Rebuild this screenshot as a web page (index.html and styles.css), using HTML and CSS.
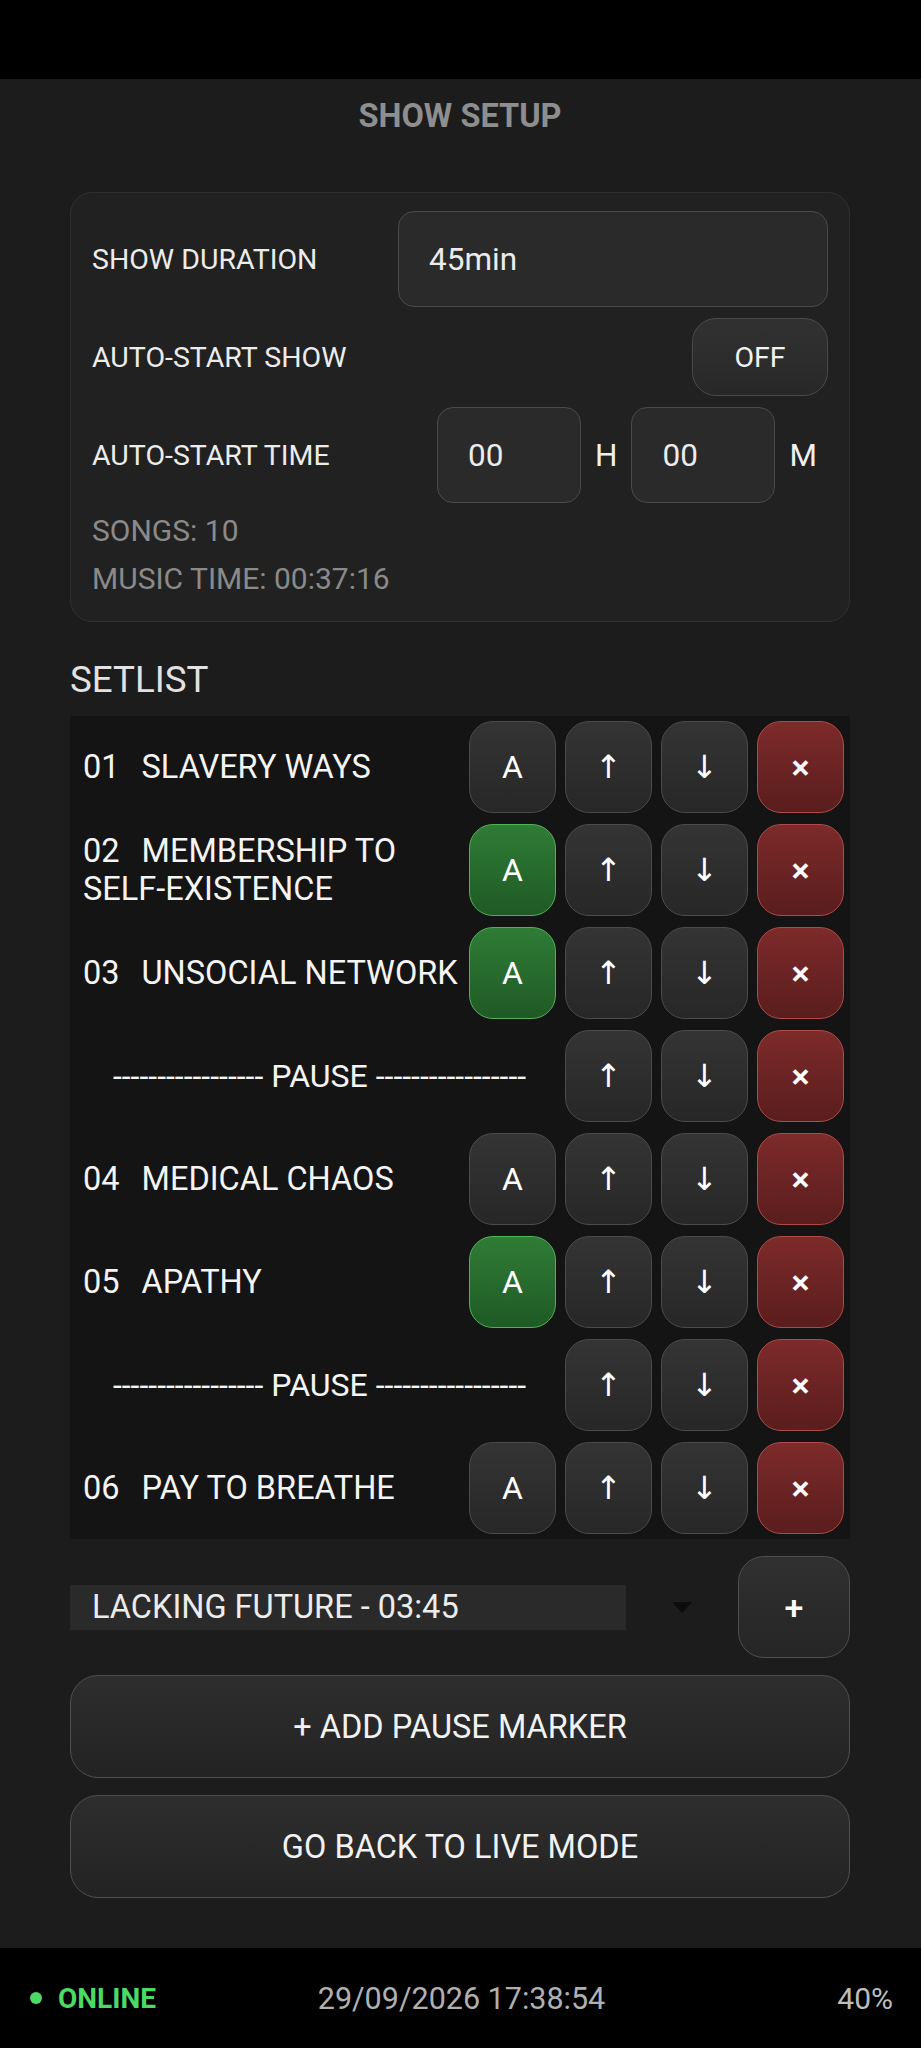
FILE: index.html
```html
<!DOCTYPE html>
<html lang="en">
<head>
<meta charset="utf-8">
<title>Show Setup</title>
<link rel="stylesheet" href="styles.css">
</head>
<body>
<div class="statusbar"></div>
<main class="page">
  <h1 class="title">SHOW SETUP</h1>

  <section class="card">
    <div class="fields">
      <div class="row">
        <span class="label">SHOW DURATION</span>
        <div class="input wide">45min</div>
      </div>
      <div class="row">
        <span class="label">AUTO-START SHOW</span>
        <button class="toggle">OFF</button>
      </div>
      <div class="row">
        <span class="label">AUTO-START TIME</span>
        <div class="time">
          <div class="input small">00</div>
          <span class="unit">H</span>
          <div class="input small">00</div>
          <span class="unit">M</span>
        </div>
      </div>
    </div>
    <div class="stats">
      <div>SONGS: 10</div>
      <div>MUSIC TIME: 00:37:16</div>
    </div>
  </section>

  <h2 class="section-title">SETLIST</h2>

  <div class="setlist">
    <div class="song">
      <div class="song-text"><span class="num">01</span>SLAVERY WAYS</div>
      <button class="btn">A</button><button class="btn">↑</button><button class="btn">↓</button><button class="btn del">×</button>
    </div>
    <div class="song">
      <div class="song-text"><span class="num">02</span><span>MEMBERSHIP TO</span> <span class="word">SELF-EXISTENCE</span></div>
      <button class="btn on">A</button><button class="btn">↑</button><button class="btn">↓</button><button class="btn del">×</button>
    </div>
    <div class="song">
      <div class="song-text"><span class="num">03</span>UNSOCIAL NETWORK</div>
      <button class="btn on">A</button><button class="btn">↑</button><button class="btn">↓</button><button class="btn del">×</button>
    </div>
    <div class="song">
      <div class="song-text pause">----------------- PAUSE -----------------</div>
      <button class="btn">↑</button><button class="btn">↓</button><button class="btn del">×</button>
    </div>
    <div class="song">
      <div class="song-text"><span class="num">04</span>MEDICAL CHAOS</div>
      <button class="btn">A</button><button class="btn">↑</button><button class="btn">↓</button><button class="btn del">×</button>
    </div>
    <div class="song">
      <div class="song-text"><span class="num">05</span>APATHY</div>
      <button class="btn on">A</button><button class="btn">↑</button><button class="btn">↓</button><button class="btn del">×</button>
    </div>
    <div class="song">
      <div class="song-text pause">----------------- PAUSE -----------------</div>
      <button class="btn">↑</button><button class="btn">↓</button><button class="btn del">×</button>
    </div>
    <div class="song">
      <div class="song-text"><span class="num">06</span>PAY TO BREATHE</div>
      <button class="btn">A</button><button class="btn">↑</button><button class="btn">↓</button><button class="btn del">×</button>
    </div>
  </div>

  <div class="add-row">
    <div class="select">
      <div class="select-box">LACKING FUTURE - 03:45</div>
      <span class="caret"></span>
    </div>
    <button class="btn plus">+</button>
  </div>

  <button class="wide-btn">+ ADD PAUSE MARKER</button>
  <button class="wide-btn">GO BACK TO LIVE MODE</button>
</main>
<footer class="footer">
  <div class="online"><span class="dot"></span>ONLINE</div>
  <div class="date">29/09/2026 17:38:54</div>
  <div class="battery">40%</div>
</footer>
</body>
</html>
```
FILE: styles.css
```css
* { box-sizing: border-box; }

body {
  margin: 0;
  width: 921px;
  background: #1c1c1c;
  font-family: Roboto, "Noto Sans", "DejaVu Sans", sans-serif;
  color: #eeeeee;
}

button {
  font-family: inherit;
  color: inherit;
  padding: 0;
  margin: 0;
}

.statusbar {
  height: 79px;
  background: #000;
}

.page {
  height: 1869px;
  padding: 17px 71px 0 70px;
}

.title {
  margin: 0;
  font-size: 32.5px;
  font-weight: 700;
  line-height: 40px;
  color: #8e8e8e;
  text-align: center;
}

.card {
  margin-top: 56px;
  background: #212121;
  border: 1px solid #303030;
  border-radius: 22px;
  padding: 18px 21px;
}

.fields {
  display: flex;
  flex-direction: column;
  gap: 11px;
}

.row {
  display: flex;
  align-items: center;
  justify-content: space-between;
}

.label {
  font-size: 28.5px;
  color: #ececec;
}

.input {
  height: 96px;
  display: flex;
  align-items: center;
  padding-left: 30px;
  background: #2a2a2a;
  border: 1.5px solid #4a4a4a;
  border-radius: 16px;
  font-size: 31.5px;
  color: #ececec;
}

.input.wide { width: 430px; }
.input.small { width: 144px; }

.toggle {
  width: 136px;
  height: 78px;
  border-radius: 24px;
  border: 1.5px solid #4a4a4a;
  background: linear-gradient(#313131, #282828);
  font-size: 28.5px;
  color: #f2f2f2;
}

.time {
  display: flex;
  align-items: center;
  gap: 14px;
  padding-right: 11px;
}

.unit {
  font-size: 31.5px;
  color: #f0f0f0;
}

.stats {
  margin-top: 4px;
  font-size: 30px;
  line-height: 48px;
  color: #8a8a8a;
}

.section-title {
  margin: 36px 0 14px;
  font-size: 36.75px;
  font-weight: 400;
  line-height: 44px;
  color: #e2e2e2;
}

.setlist {
  background: #141414;
  padding: 5px 6px 5px 13px;
  display: flex;
  flex-direction: column;
  gap: 11px;
}

.song {
  display: flex;
  align-items: center;
  gap: 9px;
}

.song-text {
  flex: 1;
  font-size: 32.5px;
  line-height: 38px;
  color: #f4f4f4;
}

.song-text.pause {
  text-align: center;
  font-size: 32px;
}

.num {
  display: inline-block;
  margin-right: 22px;
}

.word {
  display: inline-block;
}

.btn {
  flex: none;
  width: 87px;
  height: 92px;
  border-radius: 24px;
  border: 1.5px solid #4b4b4b;
  background: linear-gradient(#343434, #272727);
  color: #ffffff;
  font-size: 32px;
  display: flex;
  align-items: center;
  justify-content: center;
}

.btn.on {
  background: linear-gradient(#2f7c36, #1f5a25);
  border-color: #52b158;
}

.btn.del {
  background: linear-gradient(#7d2a2a, #5a1d1d);
  border-color: #ae4a4a;
  font-size: 34px;
  font-weight: 600;
}

.add-row {
  margin-top: 17px;
  display: flex;
  align-items: center;
  justify-content: space-between;
}

.select {
  display: flex;
  align-items: center;
}

.select-box {
  width: 556px;
  height: 45px;
  background: #2a2a2a;
  padding-left: 22px;
  font-size: 32.5px;
  line-height: 45px;
  color: #ececec;
}

.caret {
  margin-left: 46px;
  width: 0;
  height: 0;
  border-left: 10.5px solid transparent;
  border-right: 10.5px solid transparent;
  border-top: 11px solid #0c0c0c;
}

.btn.plus {
  width: 112px;
  height: 102px;
  border-radius: 26px;
  border-color: #4f4f4f;
  background: linear-gradient(#303030, #252525);
  font-size: 34px;
  font-weight: 500;
}

.wide-btn {
  display: flex;
  width: 100%;
  height: 103px;
  margin-top: 17px;
  align-items: center;
  justify-content: center;
  border-radius: 28px;
  border: 1.5px solid #4f4f4f;
  background: linear-gradient(#2e2e2e, #232323);
  font-size: 32.5px;
  color: #f2f2f2;
}

.footer {
  height: 100px;
  background: #000;
  display: grid;
  grid-template-columns: 1fr auto 1fr;
  align-items: center;
  padding: 0 28px 0 30px;
  font-size: 28px;
}

.online {
  display: flex;
  align-items: center;
  gap: 16px;
  color: #4cd964;
  font-weight: 700;
}

.dot {
  width: 12px;
  height: 12px;
  border-radius: 50%;
  background: #4cd964;
}

.date {
  font-size: 30.5px;
  color: #b0b0b0;
}

.battery {
  font-size: 30px;
  text-align: right;
  color: #bdbdbd;
}
```
